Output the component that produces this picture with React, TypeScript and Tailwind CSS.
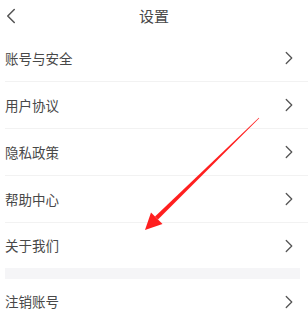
import { ChevronLeft, ChevronRight } from 'lucide-react'

const items = ['账号与安全', '用户协议', '隐私政策', '帮助中心']

function Row({ label, last }: { label: string; last?: boolean }) {
  return (
    <div
      className={`flex items-center justify-between pr-[13px] ${
        last ? 'h-[45px]' : 'h-[47px] border-b border-[#f2f2f2]'
      }`}
    >
      <span className="text-[13.5px] text-[#484848]">{label}</span>
      <ChevronRight className="w-[22px] h-[22px] text-[#555] -mr-[5px]" strokeWidth={1.4} />
    </div>
  )
}

export default function App() {
  return (
    <div
      className="relative w-[308px] h-[316px] bg-white overflow-hidden"
      style={{ fontFamily: '"Noto Sans CJK SC", "Noto Sans", sans-serif' }}
    >
      {/* header */}
      <div className="relative h-[35px] flex items-center justify-center">
        <ChevronLeft className="absolute -left-[2px] top-[3px] w-[26px] h-[26px] text-[#555]" strokeWidth={1.4} />
        <span className="text-[15px] text-[#484848] -mt-[3px]">设置</span>
      </div>

      <div className="pl-[5px]">
        {items.map((t) => (
          <Row key={t} label={t} />
        ))}
        <Row label="关于我们" last />
      </div>

      <div className="h-[11px] ml-[5px] mr-[8px] bg-[#f5f5f7]" />

      <div className="pl-[5px]">
        <Row label="注销账号" last />
      </div>

      {/* red annotation arrow */}
      <svg className="absolute inset-0 pointer-events-none" width="308" height="316" viewBox="0 0 308 316">
        <polygon points="259.2,118.2 258.8,117.8 155,216.5 158,219.5" fill="#ff1f1f" />
        <polygon points="145,230 151,212.5 162.5,224" fill="#ff1f1f" />
      </svg>
    </div>
  )
}
